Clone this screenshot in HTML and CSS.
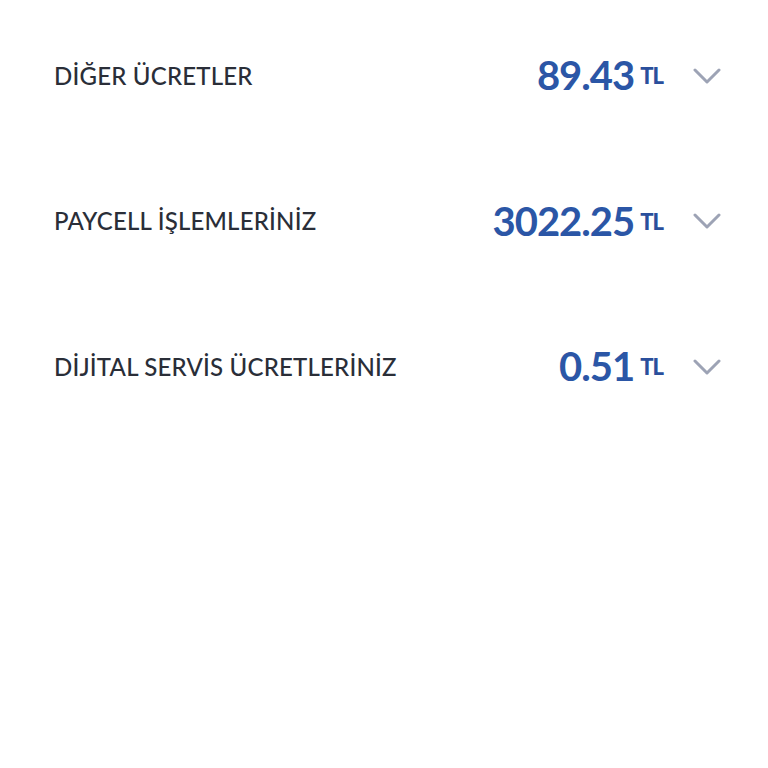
FILE: index.html
```html
<!DOCTYPE html>
<html lang="tr">
<head>
<meta charset="utf-8">
<link rel="stylesheet" href="styles.css">
</head>
<body>
<div class="list">
  <div class="row">
    <span class="label">DİĞER ÜCRETLER</span>
    <span class="amount"><span class="num">89.43</span><span class="cur">TL</span></span>
    <svg class="chev" viewBox="0 0 28 16"><path d="M2 2 L14 14 L26 2" /></svg>
  </div>
  <div class="row">
    <span class="label">PAYCELL İŞLEMLERİNİZ</span>
    <span class="amount"><span class="num">3022.25</span><span class="cur">TL</span></span>
    <svg class="chev" viewBox="0 0 28 16"><path d="M2 2 L14 14 L26 2" /></svg>
  </div>
  <div class="row">
    <span class="label">DİJİTAL SERVİS ÜCRETLERİNİZ</span>
    <span class="amount"><span class="num">0.51</span><span class="cur">TL</span></span>
    <svg class="chev" viewBox="0 0 28 16"><path d="M2 2 L14 14 L26 2" /></svg>
  </div>
</div>
</body>
</html>
```
FILE: styles.css
```css
html, body {
  margin: 0;
  padding: 0;
  background: #ffffff;
}
body {
  font-family: Lato, "Open Sans", sans-serif;
  width: 768px;
  height: 768px;
}
.list {
  display: flex;
  flex-direction: column;
  padding: 48px 47px 0 54px;
}
.row {
  display: flex;
  align-items: center;
  height: 54px;
  margin-bottom: 91.5px;
}
.label {
  flex: 1;
  font-size: 24px;
  font-weight: 500;
  color: #2a2e38;
  letter-spacing: 0.2px;
}
.amount {
  display: flex;
  align-items: flex-start;
  color: #2b56a6;
  font-weight: 700;
}
.num {
  font-size: 40px;
  line-height: 44px;
  letter-spacing: -1px;
}
.cur {
  font-size: 22px;
  line-height: 20px;
  margin-left: 6px;
  margin-top: 13px;
  letter-spacing: -1px;
  font-weight: 900;
  color: #2a4f9c;
}
.chev {
  width: 28px;
  height: 16px;
  margin-left: 30px;
  margin-top: 1px;
  fill: none;
  stroke: #9da3b5;
  stroke-width: 3;
  stroke-linecap: round;
  stroke-linejoin: round;
}
```
